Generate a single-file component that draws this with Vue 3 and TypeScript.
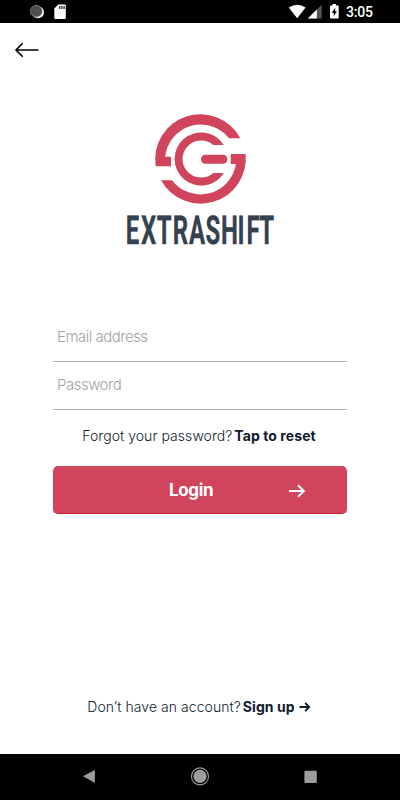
<script setup lang="ts">
import { ref } from 'vue'

const email = ref('')
const password = ref('')
const time = '3:05'
</script>

<template>
  <div class="screen">
    <header class="status">
      <svg class="status-left" width="80" height="23" viewBox="0 0 80 23">
        <circle cx="38" cy="12.3" r="6" fill="#fff" />
        <circle cx="36.3" cy="11.2" r="5.9" fill="#4f4f4f" stroke="#999" stroke-width="1" stroke-dasharray="1.4 .7" />
        <path d="M58.3 4.6H64.8a1 1 0 0 1 1 1V18a1 1 0 0 1-1 1H55.3a1 1 0 0 1-1-1V8.6Z" fill="#fff" />
        <path d="M59.8 6v3M62 6v3M64.1 6v3" stroke="#000" stroke-width="1.1" />
      </svg>
      <div class="status-right">
        <svg width="55" height="23" viewBox="0 0 55 23">
          <path d="M3.8 7.4Q12.2 2.2 20.6 7.4L12.2 18.2Z" fill="#fff" />
          <path d="M22.8 18.5 36.7 4.8V18.5Z" fill="#555" />
          <path d="M22.8 18.5 31.8 9.6V18.5Z" fill="#fff" />
          <path d="M45.9 5.5h1.6V4h3.4v1.5h1.9a.9.9 0 0 1 .9.9V17.6a.9.9 0 0 1-.9.9H45.9a.9.9 0 0 1-.9-.9V6.4a.9.9 0 0 1 .9-.9Z" fill="#fff" />
          <path d="M50.3 7.8 46.7 12.7H48.7V16.2L52 11.3H50.1Z" fill="#000" />
        </svg>
        <span class="clock">{{ time }}</span>
      </div>
    </header>

    <main class="content">
      <button class="back" type="button" aria-label="Back">
        <svg width="26" height="16" viewBox="0 0 26 16" fill="none" stroke="#000" stroke-width="1.6">
          <path d="M24.5 8H2M8.7 1.2 2 8l6.7 6.8" />
        </svg>
      </button>

      <div class="brand">
        <svg width="160" height="140" viewBox="120 110 160 140">
          <g fill="#d0455b">
            <path d="M155.7 166.3A45.2 45.2 0 0 1 240.3 138.2H229A35.8 35.8 0 0 0 165.2 156.8H171V166.3Z" />
            <path d="M245.6 154A45.2 45.2 0 0 1 161 180.2H172A35.8 35.8 0 0 0 235.9 164H230.7V154Z" />
            <path d="M223.8 145A26.6 26.6 0 1 0 223.8 173H213.4A18.6 18.6 0 1 1 213.4 145Z" />
            <rect x="201" y="154.7" width="26.4" height="9" rx="4.4" />
          </g>
          <text
            transform="translate(120 244.3) scale(.6 1)"
            x="9.7 34.8 61.2 88 114.9 142.3 168.3 195.7 210.9 232.2"
            y="0"
            class="wordmark"
          >EXTRASHIFT</text>
        </svg>
      </div>

      <form class="form" @submit.prevent>
        <input v-model="email" class="field" type="email" placeholder="Email address" />
        <input v-model="password" class="field" type="password" placeholder="Password" />
        <p class="line forgot"><span>Forgot your password?</span><b>Tap to reset</b></p>
        <button class="login" type="submit">
          <span>Login</span>
          <svg class="login-arrow" width="18" height="14" viewBox="0 0 18 14" fill="none" stroke="#fff" stroke-width="2.1">
            <path d="M1 7H16M10 1.2 15.8 7 10 12.8" />
          </svg>
        </button>
      </form>

      <p class="line signup">
        <span>Don’t have an account?</span><b>Sign up</b>
        <svg width="12" height="10" viewBox="0 0 12 10" fill="none" stroke="#101b2c" stroke-width="1.8">
          <path d="M.5 5H10M6.2 1 10.2 5 6.2 9" />
        </svg>
      </p>
    </main>

    <nav class="navbar">
      <svg width="400" height="46" viewBox="0 0 400 46" fill="#9c9c9c">
        <path d="M83 22.3 94.2 16.3a.5.5 0 0 1 .7.5V28a.5.5 0 0 1-.7.5Z" />
        <circle cx="200" cy="22.4" r="6.6" />
        <circle cx="200" cy="22.4" r="8.5" fill="none" stroke="#9c9c9c" stroke-width="1.1" />
        <rect x="304.4" y="16.7" width="12.4" height="12.2" rx="1" />
      </svg>
    </nav>
  </div>
</template>

<style>
body {
  margin: 0;
}
</style>

<style scoped>
.screen {
  width: 400px;
  height: 800px;
  display: flex;
  flex-direction: column;
  overflow: hidden;
  background: #fff;
  font-family: Inter, "Liberation Sans", sans-serif;
  color: #101b2c;
}
.status {
  height: 23px;
  flex: none;
  display: flex;
  justify-content: space-between;
  background: #000;
}
.status-right {
  display: flex;
  width: 115px;
}
.clock {
  margin-left: 6px;
  font: 500 14px/24px Roboto, sans-serif;
  letter-spacing: -0.2px;
  color: #fff;
}
.content {
  flex: 1;
  display: flex;
  flex-direction: column;
  align-items: center;
}
.back {
  align-self: flex-start;
  margin: 19px 0 0 14px;
  padding: 0;
  height: 16px;
  border: 0;
  background: none;
}
.back svg,
.brand svg,
.navbar svg {
  display: block;
}
.brand {
  margin-top: 52px;
}
.brand svg {
  overflow: visible;
}
.wordmark {
  font: 700 40px Roboto, sans-serif;
  text-rendering: geometricPrecision;
  fill: #364150;
  stroke: #364150;
  stroke-width: 0.3px;
}
.form {
  width: 294px;
  margin-top: 64px;
  display: flex;
  flex-direction: column;
}
.field {
  box-sizing: border-box;
  width: 100%;
  height: 48px;
  padding: 0 4px 2px;
  border: 0;
  border-bottom: 1px solid #b3b3b5;
  border-radius: 0;
  outline: 0;
  background: none;
  font: 300 15px Inter, sans-serif;
  letter-spacing: -0.5px;
}
.field::placeholder {
  color: #a2a2a7;
  opacity: 1;
}
.line {
  margin: 0;
  display: flex;
  align-items: center;
  justify-content: center;
  font-size: 14px;
  line-height: 20px;
  white-space: nowrap;
}
.line span {
  margin-right: 2px;
  font-weight: 300;
  letter-spacing: 0.05px;
}
.line b {
  font-weight: 700;
  letter-spacing: 0.08px;
}
.forgot {
  margin-top: 16px;
  padding-right: 2px;
}
.login {
  height: 48px;
  margin-top: 20px;
  padding: 0 41px 0 116px;
  display: flex;
  align-items: center;
  justify-content: space-between;
  border: 0;
  border-bottom: 1px solid #c51f3d;
  border-radius: 5px;
  background: #d0455b;
  color: #fff;
  font: 700 17px Inter, sans-serif;
  letter-spacing: -0.35px;
}
.login-arrow {
  margin-top: 3px;
}
.signup {
  margin-top: auto;
  margin-bottom: 37px;
  padding-right: 2px;
}
.signup svg {
  margin-left: 4px;
}
.navbar {
  height: 46px;
  flex: none;
  background: #000;
}
</style>
